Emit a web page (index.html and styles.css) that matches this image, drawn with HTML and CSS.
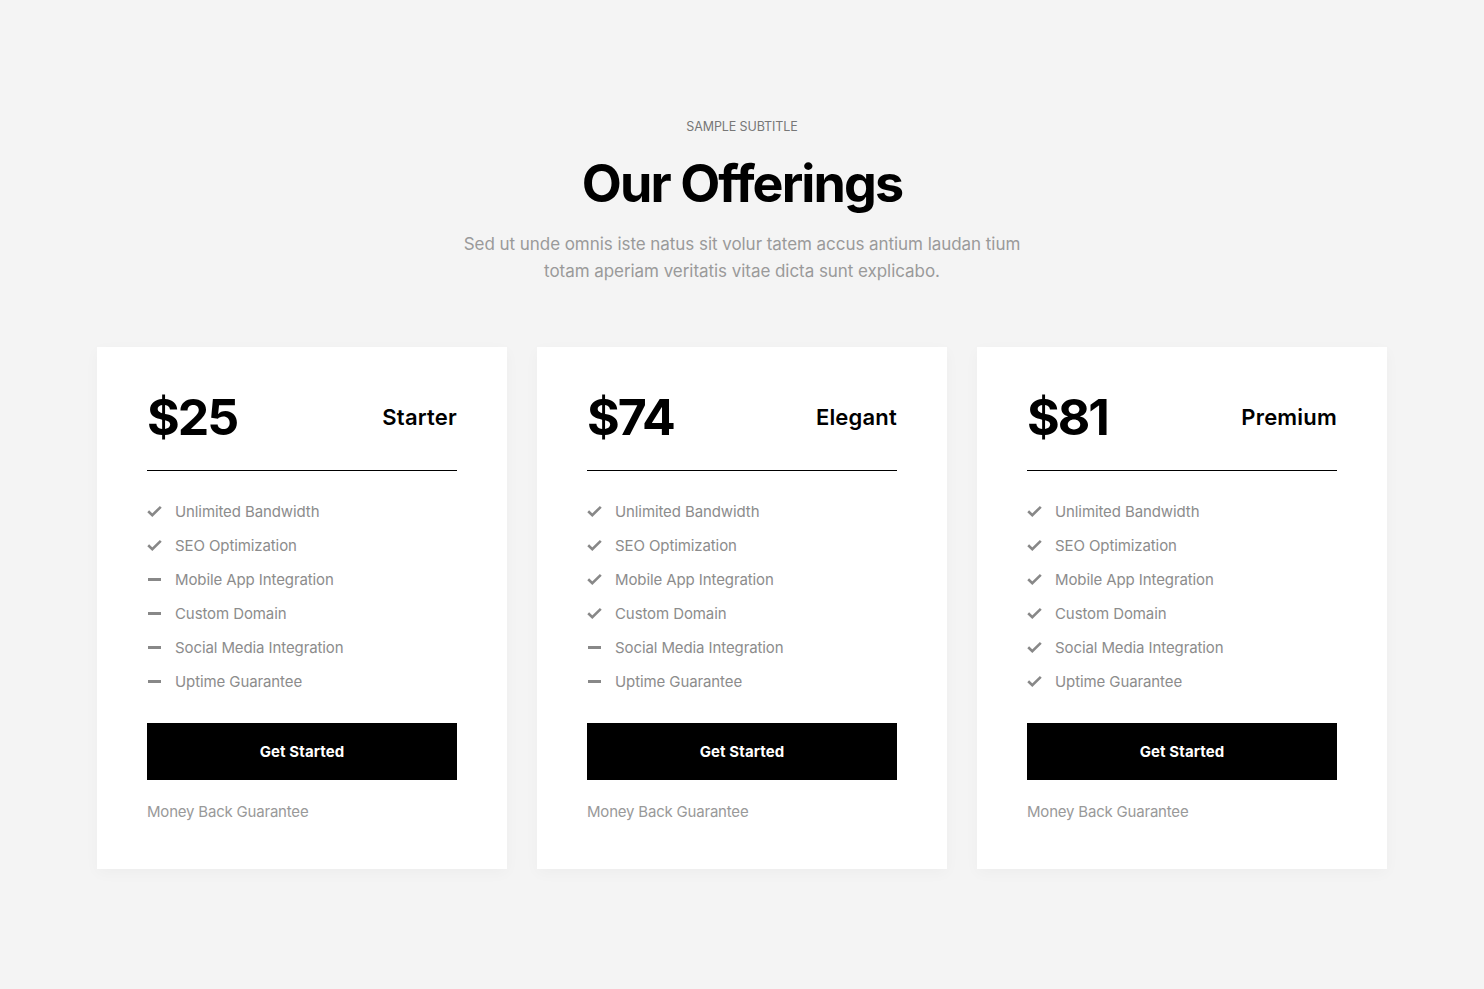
FILE: index.html
```html
<!DOCTYPE html>
<html lang="en">
<head>
<meta charset="utf-8">
<title>Our Offerings</title>
<link rel="stylesheet" href="styles.css">
</head>
<body>
<section class="pricing">
  <header class="intro">
    <p class="subtitle">SAMPLE SUBTITLE</p>
    <h1 class="title">Our Offerings</h1>
    <p class="lead">Sed ut unde omnis iste natus sit volur tatem accus antium laudan tium<br>totam aperiam veritatis vitae dicta sunt explicabo.</p>
  </header>
  <div class="cards">
    <article class="card">
      <div class="card-head"><span class="price">$25</span><span class="plan">Starter</span></div>
      <ul class="features">
        <li class="yes">Unlimited Bandwidth</li>
        <li class="yes">SEO Optimization</li>
        <li class="no">Mobile App Integration</li>
        <li class="no">Custom Domain</li>
        <li class="no">Social Media Integration</li>
        <li class="no">Uptime Guarantee</li>
      </ul>
      <a class="btn" href="#">Get Started</a>
      <p class="note">Money Back Guarantee</p>
    </article>
    <article class="card">
      <div class="card-head"><span class="price">$74</span><span class="plan">Elegant</span></div>
      <ul class="features">
        <li class="yes">Unlimited Bandwidth</li>
        <li class="yes">SEO Optimization</li>
        <li class="yes">Mobile App Integration</li>
        <li class="yes">Custom Domain</li>
        <li class="no">Social Media Integration</li>
        <li class="no">Uptime Guarantee</li>
      </ul>
      <a class="btn" href="#">Get Started</a>
      <p class="note">Money Back Guarantee</p>
    </article>
    <article class="card">
      <div class="card-head"><span class="price">$81</span><span class="plan">Premium</span></div>
      <ul class="features">
        <li class="yes">Unlimited Bandwidth</li>
        <li class="yes">SEO Optimization</li>
        <li class="yes">Mobile App Integration</li>
        <li class="yes">Custom Domain</li>
        <li class="yes">Social Media Integration</li>
        <li class="yes">Uptime Guarantee</li>
      </ul>
      <a class="btn" href="#">Get Started</a>
      <p class="note">Money Back Guarantee</p>
    </article>
  </div>
</section>
</body>
</html>
```
FILE: styles.css
```css
* { box-sizing: border-box; }
html, body { margin: 0; padding: 0; }
body {
  background: #f4f4f4;
  font-family: Inter, "Open Sans", sans-serif;
  color: #000;
}
.pricing {
  padding: 119px 0 100px;
}
.intro {
  text-align: center;
}
.subtitle {
  margin: 0;
  font-size: 12.5px;
  line-height: 16px;
  color: #777;
  letter-spacing: -0.1px;
}
.title {
  margin: 19px 0 0;
  font-size: 52px;
  line-height: 60px;
  font-weight: 700;
  letter-spacing: -1.9px;
}
.lead {
  margin: 17px 0 0;
  font-size: 17px;
  line-height: 27px;
  color: #9a9a9a;
  letter-spacing: -0.05px;
}
.cards {
  display: flex;
  gap: 30px;
  justify-content: center;
  margin-top: 62px;
}
.card {
  width: 410px;
  background: #fff;
  padding: 40px 50px 47px;
  box-shadow: 0 4px 14px rgba(0,0,0,0.03);
}
.card-head {
  display: flex;
  justify-content: space-between;
  align-items: center;
  border-bottom: 1px solid #000;
  padding-bottom: 23px;
}
.price {
  font-size: 50px;
  line-height: 60px;
  font-weight: 700;
  letter-spacing: -2px;
}
.plan {
  font-size: 22px;
  font-weight: 600;
  letter-spacing: 0.2px;
}
.features {
  list-style: none;
  margin: 23px 0 0;
  padding: 0;
}
.features li {
  display: flex;
  align-items: center;
  height: 34px;
  font-size: 15px;
  color: #8c8c8c;
  letter-spacing: -0.1px;
}
.features li::before {
  content: "";
  width: 15px;
  height: 12px;
  margin-right: 13px;
  flex: none;
  background-repeat: no-repeat;
  background-position: center;
}
.features li.yes::before {
  background-image: url("data:image/svg+xml;utf8,<svg xmlns='http://www.w3.org/2000/svg' width='15' height='12' viewBox='0 0 15 12'><path d='M1.2 6.3 L5.3 10.2 L13.8 1.8' fill='none' stroke='%23888' stroke-width='2.6'/></svg>");
}
.features li.no::before {
  background-image: linear-gradient(#888, #888);
  background-size: 13px 3px;
}
.btn {
  display: flex;
  align-items: center;
  justify-content: center;
  height: 57px;
  margin-top: 25px;
  background: #000;
  color: #fff;
  font-size: 15px;
  font-weight: 700;
  text-decoration: none;
  letter-spacing: 0.1px;
}
.note {
  margin: 22px 0 0;
  font-size: 15px;
  line-height: 20px;
  color: #999;
  letter-spacing: -0.2px;
}
```
